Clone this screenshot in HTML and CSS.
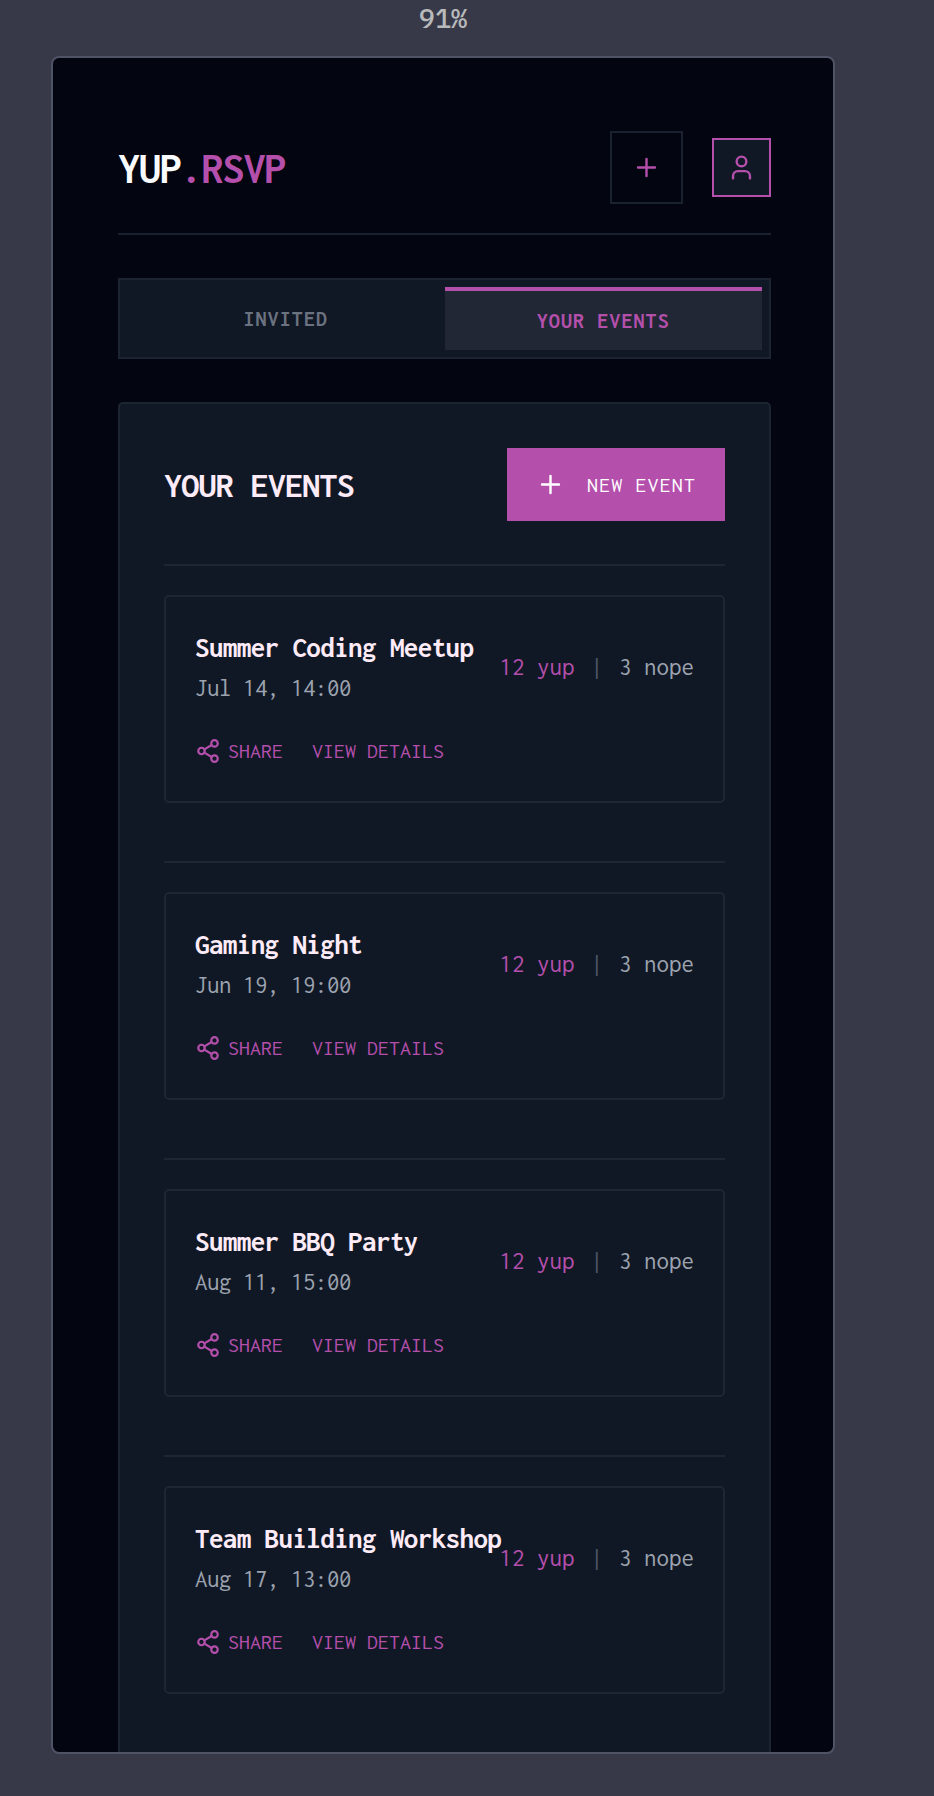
FILE: index.html
```html
<!DOCTYPE html>
<html lang="en">
<head>
<meta charset="utf-8">
<meta name="viewport" content="width=device-width, initial-scale=1">
<title>YUP.RSVP</title>
<link rel="stylesheet" href="styles.css">
</head>
<body>
<svg class="sprite" aria-hidden="true">
  <symbol id="plus" viewBox="0 0 24 24"><path d="M5 12h14M12 5v14"/></symbol>
  <symbol id="user" viewBox="0 0 24 24"><path d="M19 21v-2a4 4 0 0 0-4-4H9a4 4 0 0 0-4 4v2"/><circle cx="12" cy="7" r="4"/></symbol>
  <symbol id="share" viewBox="0 0 24 24"><circle cx="18" cy="5" r="3"/><circle cx="6" cy="12" r="3"/><circle cx="18" cy="19" r="3"/><path d="M8.6 13.5l6.8 4M15.4 6.5l-6.8 4"/></symbol>
</svg>
<div class="zoom-level">91%</div>
<div class="frame">
  <header class="header">
    <div class="logo">YUP<span class="logo-accent">.RSVP</span></div>
    <div class="header-actions">
      <button class="icon-button" type="button" aria-label="New event"><svg class="icon"><use href="#plus"/></svg></button>
      <button class="icon-button profile" type="button" aria-label="Profile"><svg class="icon"><use href="#user"/></svg></button>
    </div>
  </header>
  <nav class="tabs">
    <button class="tab" type="button">INVITED</button>
    <button class="tab active" type="button">YOUR EVENTS</button>
  </nav>
  <main class="panel">
    <div class="panel-head">
      <h1 class="panel-title">YOUR EVENTS</h1>
      <button class="new-event" type="button"><svg class="icon"><use href="#plus"/></svg>NEW EVENT</button>
    </div>
    <section class="event">
      <article class="card">
        <div class="card-top">
          <div class="info"><h2 class="name">Summer Coding Meetup</h2><p class="date">Jul 14, 14:00</p></div>
          <div class="stats"><span class="yup">12 yup</span><span class="bar">|</span><span>3 nope</span></div>
        </div>
        <div class="actions"><button class="action" type="button"><svg class="icon small"><use href="#share"/></svg>SHARE</button><a class="action" href="#">VIEW DETAILS</a></div>
      </article>
    </section>
    <section class="event">
      <article class="card">
        <div class="card-top">
          <div class="info"><h2 class="name">Gaming Night</h2><p class="date">Jun 19, 19:00</p></div>
          <div class="stats"><span class="yup">12 yup</span><span class="bar">|</span><span>3 nope</span></div>
        </div>
        <div class="actions"><button class="action" type="button"><svg class="icon small"><use href="#share"/></svg>SHARE</button><a class="action" href="#">VIEW DETAILS</a></div>
      </article>
    </section>
    <section class="event">
      <article class="card">
        <div class="card-top">
          <div class="info"><h2 class="name">Summer BBQ Party</h2><p class="date">Aug 11, 15:00</p></div>
          <div class="stats"><span class="yup">12 yup</span><span class="bar">|</span><span>3 nope</span></div>
        </div>
        <div class="actions"><button class="action" type="button"><svg class="icon small"><use href="#share"/></svg>SHARE</button><a class="action" href="#">VIEW DETAILS</a></div>
      </article>
    </section>
    <section class="event">
      <article class="card">
        <div class="card-top">
          <div class="info"><h2 class="name">Team Building Workshop</h2><p class="date">Aug 17, 13:00</p></div>
          <div class="stats"><span class="yup">12 yup</span><span class="bar">|</span><span>3 nope</span></div>
        </div>
        <div class="actions"><button class="action" type="button"><svg class="icon small"><use href="#share"/></svg>SHARE</button><a class="action" href="#">VIEW DETAILS</a></div>
      </article>
    </section>
  </main>
</div>
</body>
</html>
```
FILE: styles.css
```css
* { box-sizing: border-box; }

body {
  margin: 0;
  padding: 0 99px 42px 51px;
  background: #373949;
  color: #9ca3af;
  font-family: Inconsolata, "DejaVu Sans Mono", monospace;
  font-size: 25px;
}

h1, h2, p { margin: 0; }

button {
  margin: 0;
  padding: 0;
  border: 0;
  background: none;
  color: inherit;
  font: inherit;
  cursor: pointer;
}

.sprite { display: none; }

.icon {
  flex: none;
  width: 29px;
  height: 29px;
  fill: none;
  stroke: currentColor;
  stroke-width: 2;
  stroke-linecap: round;
  stroke-linejoin: round;
}

.icon.small { width: 26px; height: 26px; }

.zoom-level {
  height: 56px;
  color: #b9b9bb;
  font-family: "IBM Plex Mono", "Roboto Mono", "Liberation Mono", monospace;
  font-size: 27px;
  font-weight: 500;
  line-height: 36px;
  text-align: center;
}

.frame {
  padding: 73px 62px 0 65px;
  border: 2px solid #4f5366;
  border-radius: 8px;
  background: #030510;
  overflow: hidden;
}

.header {
  display: flex;
  align-items: center;
  justify-content: space-between;
  padding-bottom: 29px;
  border-bottom: 2px solid #1b222f;
}

.logo {
  color: #f9fafb;
  font-size: 44px;
  font-weight: 700;
  line-height: 44px;
  letter-spacing: -0.025em;
}

.logo-accent { color: #b44fac; }

.header-actions {
  display: flex;
  align-items: center;
  gap: 29px;
}

.icon-button {
  display: flex;
  align-items: center;
  justify-content: center;
  width: 73px;
  height: 73px;
  border: 2px solid #1b222f;
  color: #b44fac;
}

.profile {
  width: 59px;
  height: 59px;
  border-color: #b44fac;
  background: #111825;
}

.tabs {
  display: grid;
  grid-template-columns: 1fr 1fr;
  margin: 43px 0;
  padding: 7px;
  border: 2px solid #1c2431;
  background: #111825;
}

.tab {
  height: 63px;
  color: #6b7280;
  font-size: 22px;
  font-weight: 700;
  letter-spacing: 0.05em;
}

.tab.active {
  border-top: 4px solid #b44fac;
  background: #212734;
  color: #b44fac;
}

.panel {
  padding: 44px 44px 0;
  border: 2px solid #1c2431;
  border-bottom: 0;
  border-radius: 5px 5px 0 0;
  background: #111825;
}

.panel-head {
  display: flex;
  align-items: center;
  justify-content: space-between;
  margin-bottom: 43px;
}

.panel-title {
  color: #fdebf8;
  font-size: 36px;
  font-weight: 700;
  line-height: 36px;
  letter-spacing: -0.02em;
}

.new-event {
  display: flex;
  align-items: center;
  gap: 22px;
  height: 73px;
  padding: 0 29px;
  background: #b44fac;
  color: #fff;
  font-size: 22px;
  letter-spacing: 0.05em;
}

.event {
  padding: 29px 0 58px;
  border-top: 2px solid #1f2633;
}

.card {
  padding: 29px 29px 36px;
  border: 2px solid #1f2633;
  border-radius: 5px;
}

.card-top {
  display: flex;
  align-items: center;
  justify-content: space-between;
}

.info { min-width: 0; }

.name {
  color: #fdebf8;
  font-size: 29px;
  font-weight: 700;
  line-height: 44px;
  letter-spacing: -0.02em;
  white-space: nowrap;
}

.date {
  line-height: 37px;
  letter-spacing: -0.02em;
}

.stats {
  display: flex;
  gap: 16px;
  white-space: nowrap;
}

.yup { color: #b44fac; }

.bar { color: #4b5563; }

.actions {
  display: flex;
  align-items: center;
  gap: 29px;
  margin-top: 29px;
}

.action {
  display: flex;
  align-items: center;
  gap: 7px;
  color: #b44fac;
  font-size: 22px;
  line-height: 29px;
  text-decoration: none;
}
```
